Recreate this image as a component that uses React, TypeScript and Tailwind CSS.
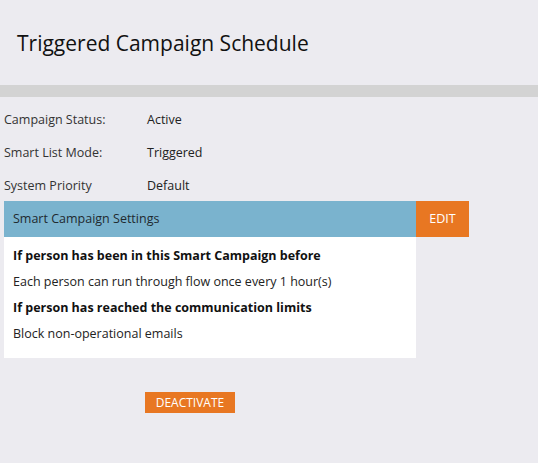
import React from 'react';

const rows = [
  { label: 'Campaign Status:', value: 'Active' },
  { label: 'Smart List Mode:', value: 'Triggered' },
  { label: 'System Priority', value: 'Default' },
];

export default function App() {
  return (
    <div className="w-[538px] h-[463px] bg-[#ecebf0] text-[#222] font-['Open_Sans',sans-serif] flex flex-col">
      <div className="h-[85px] flex items-center pl-[17px] pt-[2px]">
        <h1 className="text-[21px] text-[#111] leading-none">Triggered Campaign Schedule</h1>
      </div>
      <div className="h-[12px] bg-[#d3d3d3]" />

      <div className="flex flex-col pt-[7px] mb-[-1px]">
        {rows.map(r => (
          <div key={r.label} className="h-[33px] flex items-center text-[12.5px] text-[#333]">
            <div className="w-[147px] pl-[4px]">{r.label}</div>
            <div className="text-[#222]">{r.value}</div>
          </div>
        ))}
      </div>

      <div className="flex ml-[4px] mt-[-1px]">
        <div className="w-[412px] flex flex-col">
          <div className="h-[36px] bg-[#7ab3ce] flex items-center pl-[9px] text-[12.5px] text-[#1f2a30]">
            Smart Campaign Settings
          </div>
          <div className="bg-white h-[121px] pl-[9px] pt-[6px] flex flex-col">
            <div className="h-[26px] flex items-center text-[12.5px] font-bold text-[#111]">If person has been in this Smart Campaign before</div>
            <div className="h-[26px] flex items-center text-[12.5px] text-[#222]">Each person can run through flow once every 1 hour(s)</div>
            <div className="h-[26px] flex items-center text-[12.5px] font-bold text-[#111]">If person has reached the communication limits</div>
            <div className="h-[26px] flex items-center text-[12.5px] text-[#222]">Block non-operational emails</div>
          </div>
        </div>
        <button className="w-[53px] h-[36px] bg-[#e87722] text-white text-[12.5px] flex items-center justify-center">
          EDIT
        </button>
      </div>

      <div className="pl-[145px] mt-[34px]">
        <button className="w-[90px] h-[21px] bg-[#e87722] text-white text-[12px] flex items-center justify-center">
          DEACTIVATE
        </button>
      </div>
    </div>
  );
}
